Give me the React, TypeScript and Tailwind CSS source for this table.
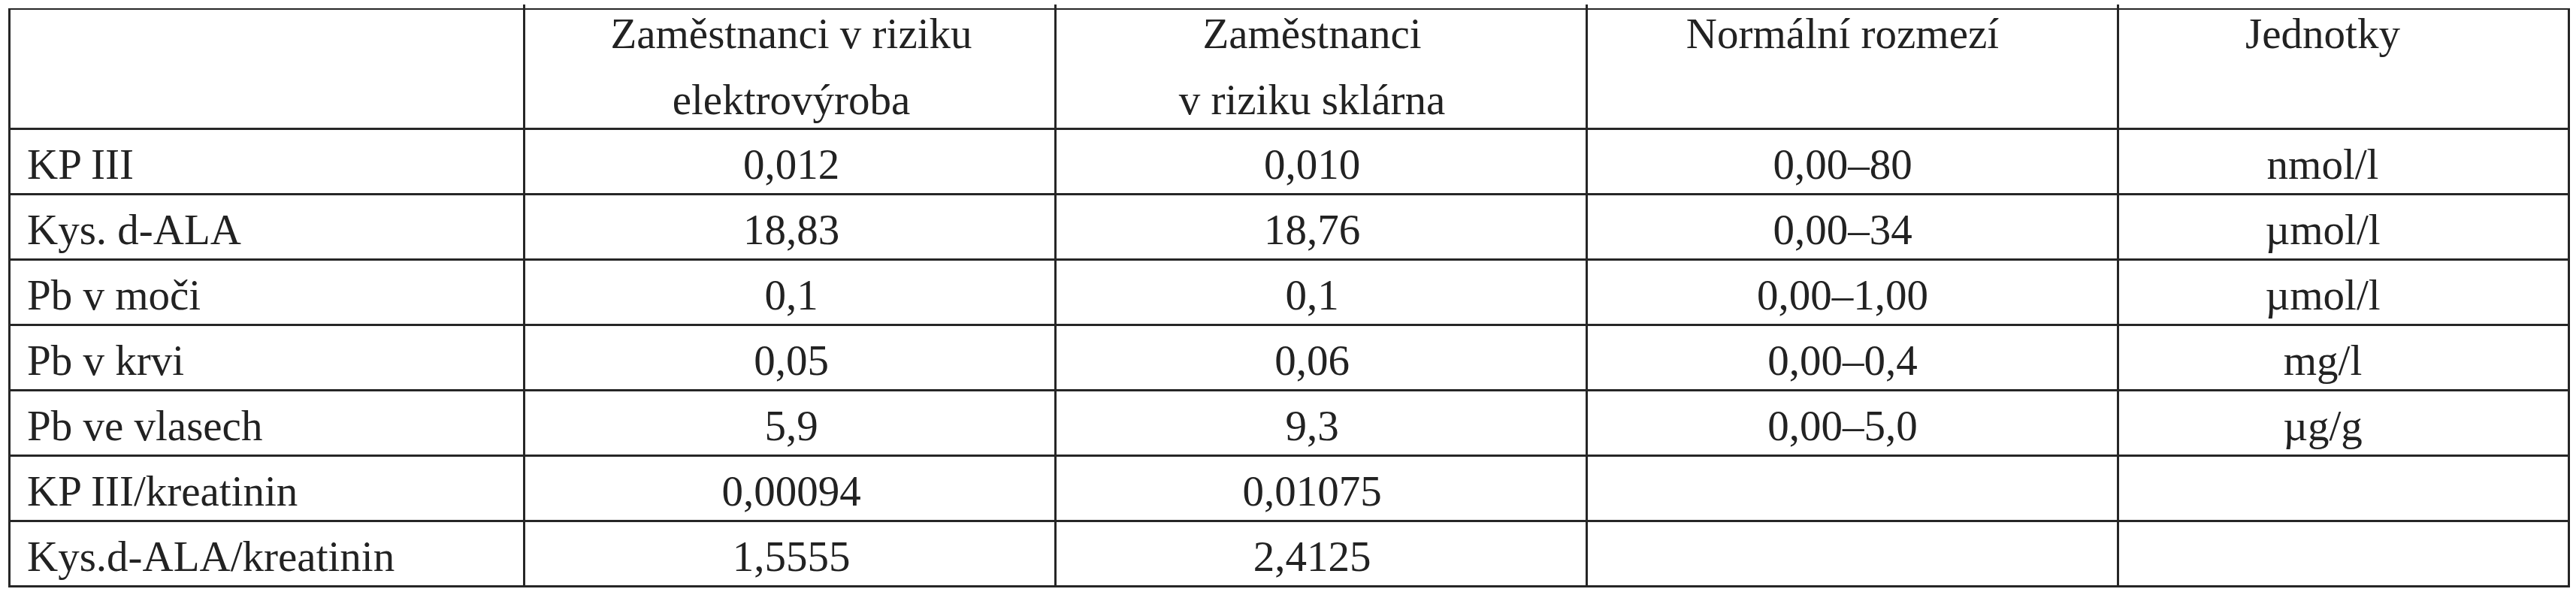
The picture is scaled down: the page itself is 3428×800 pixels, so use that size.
const rows: [string, string, string, string, string][] = [
  ["KP III", "0,012", "0,010", "0,00–80", "nmol/l"],
  ["Kys. d-ALA", "18,83", "18,76", "0,00–34", "µmol/l"],
  ["Pb v moči", "0,1", "0,1", "0,00–1,00", "µmol/l"],
  ["Pb v krvi", "0,05", "0,06", "0,00–0,4", "mg/l"],
  ["Pb ve vlasech", "5,9", "9,3", "0,00–5,0", "µg/g"],
  ["KP III/kreatinin", "0,00094", "0,01075", "", ""],
  ["Kys.d-ALA/kreatinin", "1,5555", "2,4125", "", ""],
];

const grid = "grid grid-cols-[685px_707px_707px_707px_600px]";
const cell = "border-r-[3px] border-b-[3px] border-[#262626]";
// horizontal nudges so values sit where they do in the source table
const align = ["text-left pl-[22px]", "text-center pl-[4px]", "text-center pr-[24px]", "text-center pr-[26px]", "text-center pr-[55px]"];

function HeaderCell({ lines, i }: { lines: string[]; i: number }) {
  return (
    <div className={`${cell} h-[160px] pt-[1px] flex flex-col gap-[26px] ${align[i]}`}>
      {lines.map((l) => (
        <span key={l}>{l}</span>
      ))}
    </div>
  );
}

export default function App() {
  const header = [[], ["Zaměstnanci v riziku", "elektrovýroba"], ["Zaměstnanci", "v riziku sklárna"], ["Normální rozmezí"], ["Jednotky"]];

  return (
    <div className="font-serif">
      <div className="font-[Liberation_Serif]">
        <div className="w-[3428px] min-h-[800px] bg-white pl-[11px] pt-[6px] text-[57px] leading-[62px] text-[#222]">
          {/* little ticks where the column rules poke above the top line */}
          <div className={`${grid} h-[5px] pl-[3px]`}>
            <div className="border-r-[3px] border-[#262626]" />
            <div className="border-r-[3px] border-[#262626]" />
            <div className="border-r-[3px] border-[#262626]" />
            <div className="border-r-[3px] border-[#262626]" />
            <div />
          </div>

          <div className="w-fit border-l-[3px] border-t-2 border-[#262626]">
            <div className={grid}>
              {header.map((lines, i) => (
                <HeaderCell key={i} lines={lines} i={i} />
              ))}
            </div>

            {rows.map((r) => (
              <div key={r[0]} className={grid}>
                {r.map((v, i) => (
                  <div key={i} className={`${cell} h-[87px] pt-[15px] ${align[i]}`}>
                    {v}
                  </div>
                ))}
              </div>
            ))}
          </div>
        </div>
      </div>
    </div>
  );
}
